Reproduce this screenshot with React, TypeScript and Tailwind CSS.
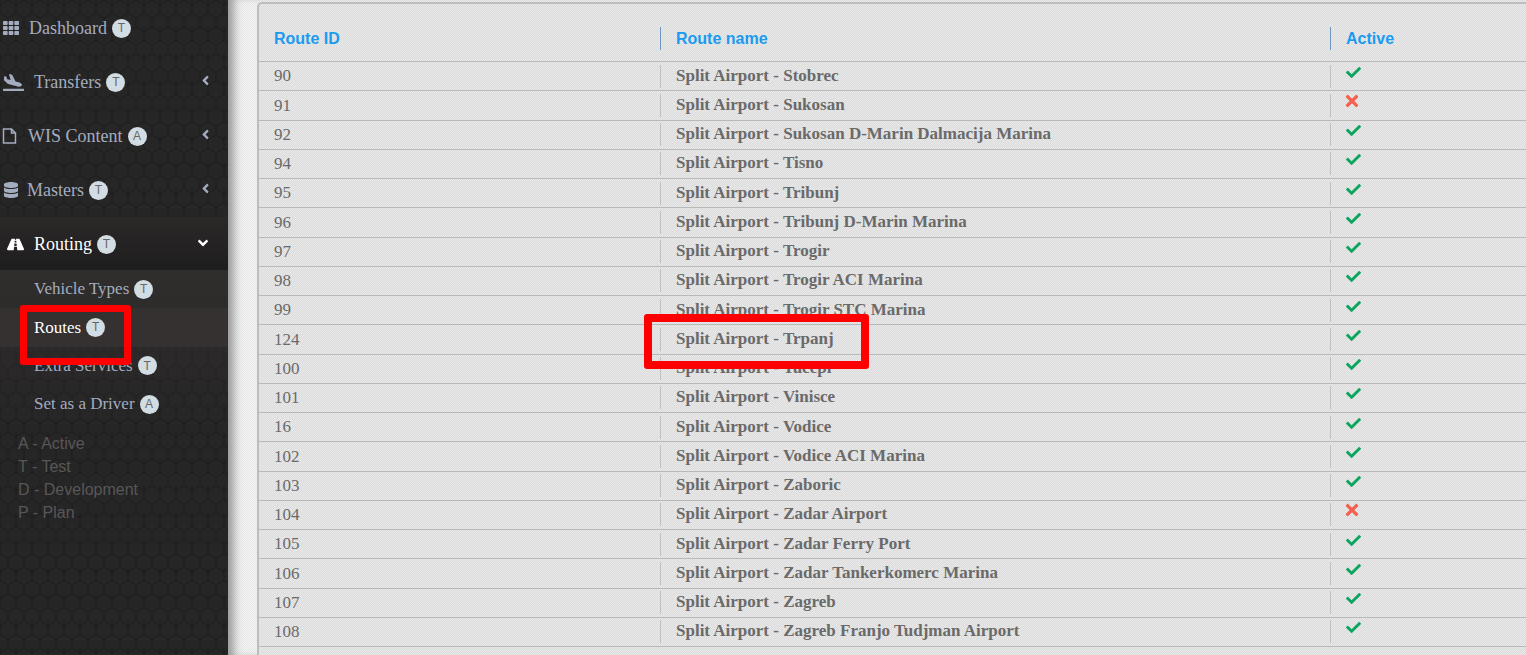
import React from "react";
import { FaTh, FaPlaneArrival, FaDatabase, FaRoad, FaAngleLeft, FaAngleDown, FaCheck, FaTimes } from "react-icons/fa";

type Route = { id: number; name: string; active: boolean };

const routes: Route[] = [
  { id: 90, name: "Stobrec", active: true },
  { id: 91, name: "Sukosan", active: false },
  { id: 92, name: "Sukosan D-Marin Dalmacija Marina", active: true },
  { id: 94, name: "Tisno", active: true },
  { id: 95, name: "Tribunj", active: true },
  { id: 96, name: "Tribunj D-Marin Marina", active: true },
  { id: 97, name: "Trogir", active: true },
  { id: 98, name: "Trogir ACI Marina", active: true },
  { id: 99, name: "Trogir STC Marina", active: true },
  { id: 124, name: "Trpanj", active: true },
  { id: 100, name: "Tucepi", active: true },
  { id: 101, name: "Vinisce", active: true },
  { id: 16, name: "Vodice", active: true },
  { id: 102, name: "Vodice ACI Marina", active: true },
  { id: 103, name: "Zaboric", active: true },
  { id: 104, name: "Zadar Airport", active: false },
  { id: 105, name: "Zadar Ferry Port", active: true },
  { id: 106, name: "Zadar Tankerkomerc Marina", active: true },
  { id: 107, name: "Zagreb", active: true },
  { id: 108, name: "Zagreb Franjo Tudjman Airport", active: true },
];

const Badge: React.FC<{ label: string }> = ({ label }) => (
  <span className="ml-[5px] flex h-[19px] w-[19px] items-center justify-center rounded-full bg-[#d2dce3] font-['Liberation_Sans',sans-serif] text-[12px] text-[#666]">
    {label}
  </span>
);

const MainItem: React.FC<{
  icon: React.ReactNode;
  label: string;
  badge: string;
  gap: string;
  arrow?: boolean;
  open?: boolean;
}> = ({ icon, label, badge, gap, arrow, open }) => (
  <div
    className={`flex h-[54px] items-center ${
      open ? "bg-gradient-to-b from-[#2b2828] to-[#1e1d1d] pr-[17px] text-white" : "pr-[15px] text-[#a4acbf]"
    }`}
  >
    <span className={`flex items-center ${gap}`}>{icon}</span>
    <span>{label}</span>
    <Badge label={badge} />
    {arrow && <FaAngleLeft className="mb-[3px] ml-auto text-[15px]" />}
    {open && <FaAngleDown className="mb-[3px] ml-auto text-[16px]" />}
  </div>
);

const SubItem: React.FC<{ label: string; badge: string; current?: boolean }> = ({ label, badge, current }) => (
  <div
    className={`flex h-[38.3px] items-center pl-[34px] text-[17px] ${
      current ? "bg-[#353131] text-white" : "text-[#a4acbf]"
    }`}
  >
    <span>{label}</span>
    <Badge label={badge} />
  </div>
);

function FileIcon() {
  return (
    <svg width="15" height="16" viewBox="0 0 15 16" fill="none" stroke="currentColor" strokeWidth="1.5" aria-hidden="true">
      <path d="M1.5 1h8l4 4v10h-12z M9.5 1v4h4" />
    </svg>
  );
}

function Sidebar() {
  return (
    <aside className="relative h-full w-[228px] shrink-0 overflow-hidden bg-[#272626] font-['Liberation_Serif',serif] text-[18px]">
      <svg className="absolute inset-0 h-full w-full" aria-hidden="true">
        <defs>
          <pattern id="hex" width="16" height="27" patternUnits="userSpaceOnUse">
            <path
              d="M8 0 L16 4.5 L16 13.5 L8 18 L0 13.5 L0 4.5 Z M8 18 L8 27 M0 4.5 L0 0 M16 4.5 L16 0"
              fill="none"
              stroke="#000"
              strokeOpacity="0.25"
              strokeWidth="1"
            />
          </pattern>
        </defs>
        <rect width="100%" height="100%" fill="url(#hex)" />
      </svg>
      <div className="relative pt-px">
        <MainItem icon={<FaTh className="text-[16px]" />} label="Dashboard" badge="T" gap="ml-[3px] mr-[10px]" />
        <MainItem icon={<FaPlaneArrival className="text-[21px]" />} label="Transfers" badge="T" gap="ml-[3px] mr-[10px]" arrow />
        <MainItem icon={<FileIcon />} label="WIS Content" badge="A" gap="ml-[2px] mr-[11px]" arrow />
        <MainItem icon={<FaDatabase className="text-[16px]" />} label="Masters" badge="T" gap="ml-[3px] mr-[8px]" arrow />
        <MainItem icon={<FaRoad className="text-[17px]" />} label="Routing" badge="T" gap="ml-[7px] mr-[10px]" open />
        <div className="-mt-px bg-gradient-to-b from-[#302d2d] to-transparent">
          <SubItem label="Vehicle Types" badge="T" />
          <SubItem label="Routes" badge="T" current />
          <SubItem label="Extra Services" badge="T" />
          <SubItem label="Set as a Driver" badge="A" />
        </div>
        <div className="mt-[9px] pl-[18px] font-['Liberation_Sans',sans-serif] text-[16px] leading-[23px] text-[#575757]">
          <div>A - Active</div>
          <div>T - Test</div>
          <div>D - Development</div>
          <div>P - Plan</div>
        </div>
      </div>
    </aside>
  );
}

function RouteRow({ route }: { route: Route }) {
  return (
    <div className="grid h-[29.25px] grid-cols-[401px_670px_1fr] items-center border-b border-[#b9b9b9] text-[17px] text-[#6a6a6a]">
      <div className="pl-[15px] font-['Liberation_Serif',serif]">{route.id}</div>
      <div className="h-[23px] border-l border-[#c0c0c0] pl-[15px] font-['Liberation_Serif',serif] font-bold leading-[21px]">
        Split Airport - {route.name}
      </div>
      <div className="h-[23px] border-l border-[#c0c0c0] pl-[15px]">
        {route.active ? (
          <FaCheck className="text-[15px] text-[#0ca560]" />
        ) : (
          <FaTimes className="-mt-[2px] -ml-[3px] text-[18px] text-[#f5604f]" />
        )}
      </div>
    </div>
  );
}

export default function App() {
  return (
    <div className="relative flex h-[655px] w-[1526px] overflow-hidden">
      <Sidebar />
      <main className="min-w-0 flex-1 bg-[conic-gradient(#f5f5f5_25%,#e6e6e6_0_50%,#f5f5f5_0_75%,#e6e6e6_0)] bg-[length:2px_2px] pt-[2px] pl-[29px] shadow-[inset_10px_0_8px_-4px_rgba(0,0,0,0.35)]">
        <section className="h-full rounded-tl-[5px] border-t-2 border-l-2 border-[#bdbdbd] bg-[conic-gradient(#e8e8e8_25%,#dcdcdc_0_50%,#e8e8e8_0_75%,#dcdcdc_0)] bg-[length:2px_2px]">
          <div className="grid h-[58px] grid-cols-[401px_670px_1fr] items-center border-b border-[#b9b9b9] pt-[12px] font-['Liberation_Sans',sans-serif] text-[16px] font-bold text-[#1a9bf0]">
            <div className="pl-[15px]">Route ID</div>
            <div className="flex h-[23px] items-center border-l border-[#6f97c5] pl-[15px]">Route name</div>
            <div className="flex h-[23px] items-center border-l border-[#6f97c5] pl-[15px]">Active</div>
          </div>
          {routes.map((r) => (
            <RouteRow key={r.id} route={r} />
          ))}
        </section>
      </main>

      {/* red annotation boxes drawn over the page */}
      <div className="absolute top-[305px] left-[20px] h-[60px] w-[111px] rounded-[3px] border-[7px] border-[#ff0000]" />
      <div className="absolute top-[314px] left-[644px] h-[55px] w-[225px] rounded-[3px] border-[8px] border-[#ff0000]" />
    </div>
  );
}
